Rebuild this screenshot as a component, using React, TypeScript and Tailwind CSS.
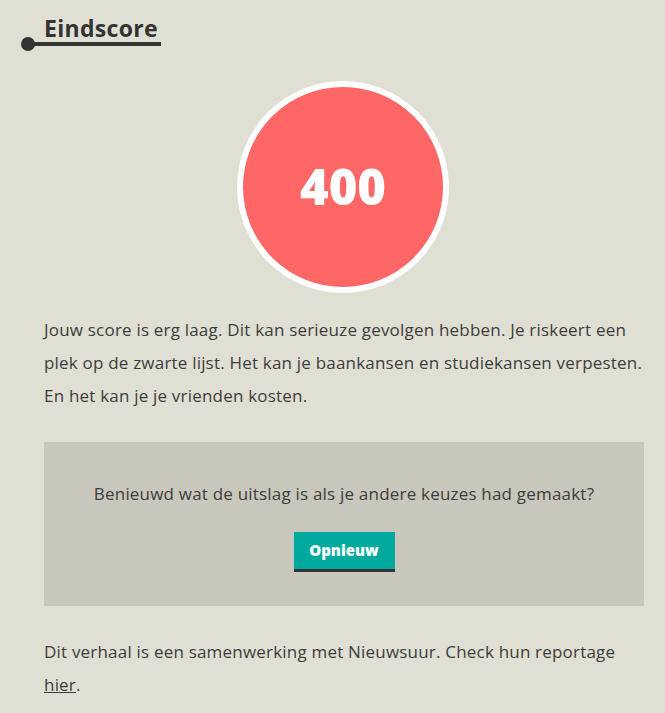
export default function App() {
  return (
    <div className="min-h-[713px] bg-[#dfdfd3] text-[#3d3d3d] font-['Open_Sans',sans-serif]">
      <div className="w-[600px] ml-[44px] pt-[13px]">
        <div className="relative inline-block">
          <h2 className="text-[23px] font-bold leading-[31px] text-[#333] tracking-[0.3px]">Eindscore</h2>
          <div className="absolute left-[-16px] right-[-3px] top-[29px] h-[4px] bg-[#333]" />
          <div className="absolute left-[-23px] top-[24px] w-[14px] h-[14px] rounded-full bg-[#333]" />
        </div>

        <div className="flex justify-center mt-[37px] ml-[-2px]">
          <div className="w-[212px] h-[212px] rounded-full bg-[#ff6666] border-[6px] border-white flex items-center justify-center">
            <span className="text-[49px] font-extrabold text-white">400</span>
          </div>
        </div>

        <p className="mt-[20px] text-[17px] leading-[33px] tracking-[0.2px]">
          Jouw score is erg laag. Dit kan serieuze gevolgen hebben. Je riskeert een plek op de zwarte lijst. Het kan je baankansen en studiekansen verpesten. En het kan je je vrienden kosten.
        </p>

        <div className="mt-[30px] bg-[#c8c7bc] h-[164px] flex flex-col items-center pt-[40px]">
          <p className="text-[17px] leading-[24px] tracking-[0.2px]">Benieuwd wat de uitslag is als je andere keuzes had gemaakt?</p>
          <button className="mt-[26px] w-[101px] h-[40px] bg-[#00a99d] border-b-[3px] border-[#333] text-white text-[15px] font-extrabold">
            Opnieuw
          </button>
        </div>

        <p className="mt-[29px] text-[17px] leading-[33px] tracking-[0.2px]">
          Dit verhaal is een samenwerking met Nieuwsuur. Check hun reportage <a className="underline" href="#">hier</a>.
        </p>
      </div>
    </div>
  );
}
